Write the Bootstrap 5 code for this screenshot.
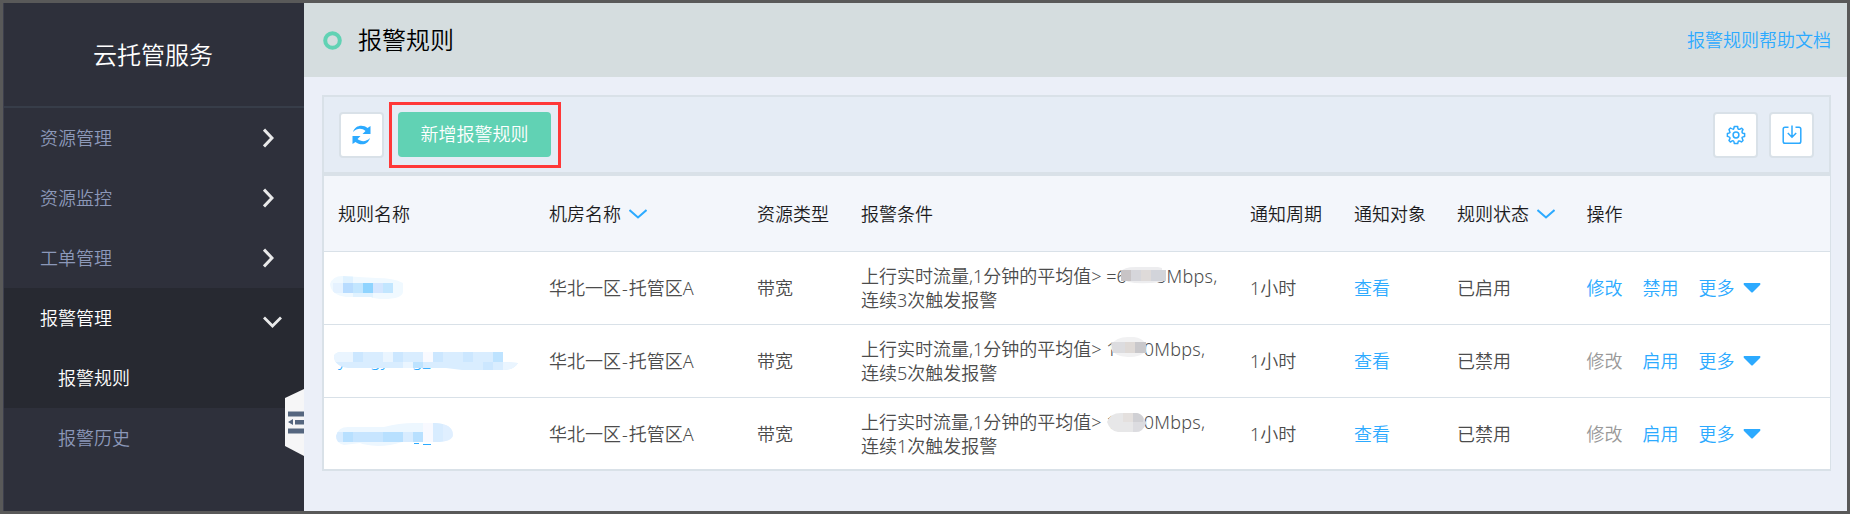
<!DOCTYPE html>
<html lang="zh-CN">
<head>
<meta charset="utf-8">
<title>报警规则</title>
<link href="https://cdn.jsdelivr.net/npm/bootstrap@5.3.0/dist/css/bootstrap.min.css" rel="stylesheet">
<style>
body{font-family:"Noto Sans","Noto Sans CJK SC",sans-serif;font-size:18px;font-weight:350;line-height:24px;color:#4c4c4c;background:#ebeff8}
svg{display:block}
a{color:#2caaff;text-decoration:none}
.frame{height:514px;border:3px solid #595959}
.side{width:301px;background:#2e303b;border-left:1px solid #3d3f4d}
.brand{height:105px;border-bottom:2px solid #373d49;font-size:24px;color:#fff;padding-right:2px;padding-bottom:0}
.item{height:60px;padding-left:36px;padding-right:30px;color:#8c98b9}
.sub{padding-left:54px}
.on{background:#272931;color:#fff}
.handle{right:0;top:386px}
.top{height:74px;background:#d5dddf;padding:0 16px 0 19px}
.top h1{font-size:24px;font-weight:350;color:#000;margin:0 0 0 16px;line-height:30px}
.panel{margin:18px 16px 0 18px;border:2px solid #d9e1e8;border-right-width:1px;background:#fff}
.tools{height:77px;background:#e5ecf5;border-bottom:2px solid #d9e1e8;padding:1px 15px 0 15px;border-right:1px solid #d9e1e8}
.sq{width:45px;height:46px;border:2px solid #d9e1e8;border-radius:4px;background:#fff;padding:0}
.hot{width:172px;height:66px;border:3px solid #ff3838;margin-left:5px;padding:0 1px 1px 0}
.add{--bs-btn-border-width:0;width:153px;height:45px;border-radius:4px;background:#61d2b4;color:#fff;font-size:18px;font-weight:350;padding:0}
.add:hover{background:#61d2b4;color:#fff}
.rules{table-layout:fixed;margin:0;--bs-table-bg:transparent;color:inherit}
.rules>:not(caption)>*>*{padding:1px 0 0;border-bottom:0;vertical-align:middle;color:inherit}
.rules th{font-weight:350;color:#1c1c1e}
.rules thead tr{height:76px;background:#f3f6fb;border-top:2px solid #d9e1e8}
.rules tbody tr{height:73px;border-top:1px solid #d9e1e8}
.rules tbody tr:last-child{height:72px}
.off{color:#999}
.gt{margin-right:4.5px}
.dash{margin:0 1px}
.unit{letter-spacing:.3px}
.hid{display:inline-block;position:relative;height:24px;vertical-align:top}
.hid svg{position:absolute;left:0;top:0}
.hid .tail{position:absolute;right:0}
.acts{gap:20px}
</style>
</head>
<body>
<div class="frame d-flex overflow-hidden">
  <nav class="side flex-shrink-0 position-relative">
    <div class="brand d-flex align-items-center justify-content-center">云托管服务</div>
    <div class="item d-flex align-items-center justify-content-between">资源管理<svg width="11" height="20" fill="none" stroke="#e9e9ea" stroke-width="3"><path d="M1 1.500L9 10L1 18.500"/></svg></div>
    <div class="item d-flex align-items-center justify-content-between">资源监控<svg width="11" height="20" fill="none" stroke="#e9e9ea" stroke-width="3"><path d="M1 1.500L9 10L1 18.500"/></svg></div>
    <div class="item d-flex align-items-center justify-content-between">工单管理<svg width="11" height="20" fill="none" stroke="#e9e9ea" stroke-width="3"><path d="M1 1.500L9 10L1 18.500"/></svg></div>
    <div class="item on d-flex align-items-center justify-content-between" style="padding-right:22px">报警管理<svg width="19" height="12" class="mt-2" fill="none" stroke="#e9e9ea" stroke-width="2.800"><path d="M1 1.500L9.500 10L18 1.500"/></svg></div>
    <div class="item sub on d-flex align-items-center">报警规则</div>
    <div class="item sub d-flex align-items-center">报警历史</div>
    <svg class="handle position-absolute" width="19" height="67"><path d="M0 9L19 0V67L0 57Z" fill="#f6f6f7"/><path d="M3 22.500H19V27.500H3ZM10 31H19V35.500H10ZM8 30V36L3 33ZM3 39.500H19V44.500H3Z" fill="#55667f"/></svg>
  </nav>
  <main class="flex-grow-1">
    <header class="top d-flex align-items-center">
      <svg width="19" height="19"><circle cx="9.500" cy="9.500" r="7.300" fill="none" stroke="#61d2b4" stroke-width="4"/></svg>
      <h1>报警规则</h1>
      <a href="#" class="ms-auto">报警规则帮助文档</a>
    </header>
    <section class="panel">
      <div class="tools d-flex align-items-center">
        <button class="sq d-flex align-items-center justify-content-center"><svg width="20" height="20" fill="#2caaff"><path d="M1 7C3 0 11-1 15.500 3L18.500 1V9H10.500L13.500 6C10 3 5 3 1 7ZM18 13C16 20 8.500 21 3.500 17L.5 19V11H8.500L5.500 14C9.500 17 14 17 18 13Z"/></svg></button>
        <div class="hot d-flex align-items-center justify-content-center"><button class="add btn">新增报警规则</button></div>
        <button class="sq ms-auto d-flex align-items-center justify-content-center"><svg width="20" height="20" viewBox="0 0 20 20" fill="none" stroke="#2caaff" stroke-width="1.500"><circle cx="10" cy="10" r="2.900"/><path d="M8.300 1.500H11.700Q11.500 5 14 4.200L15.700 3.200L17 4.500Q15 7.500 17 8.200L18.600 8.600V11.400Q15 12 16.300 13.500L17 15.500L15.500 17Q12.500 15 12.200 16.600L11.700 18.500H8.300Q8 15 6.200 15.900L4.400 17L3 15.500Q5 12.500 3 11.900L1.400 11.400V8.600Q5 8 3.700 6.500L3 4.500L4.500 3Q7.500 5 7.800 3.500Z" stroke-linejoin="round"/></svg></button>
        <button class="sq d-flex align-items-center justify-content-center" style="margin-left:11px"><svg width="20" height="20" fill="none" stroke="#2caaff" stroke-width="1.500"><path d="M6.500 2.200H3Q1.200 2.200 1.200 4V16.500Q1.200 18.300 3 18.300H17Q18.800 18.300 18.800 16.500V4Q18.800 2.200 17 2.200H13.500M10 0.500V12M5.800 8L10 12.200L14.200 8"/></svg></button>
      </div>
      <table class="rules table">
        <colgroup><col style="width:225px"><col style="width:208px"><col style="width:104px"><col style="width:389px"><col style="width:104px"><col style="width:103px"><col style="width:129.5px"><col></colgroup>
        <thead><tr>
          <th><div style="padding-left:14px">规则名称</div></th>
          <th><div class="d-flex align-items-center">机房名称<svg class="ms-2" width="18" height="10" fill="none" stroke="#2caaff" stroke-width="2"><path d="M.5 1L9 8.500L17.500 1"/></svg></div></th>
          <th>资源类型</th><th>报警条件</th><th>通知周期</th><th>通知对象</th>
          <th><div class="d-flex align-items-center">规则状态<svg class="ms-2" width="18" height="10" fill="none" stroke="#2caaff" stroke-width="2"><path d="M.5 1L9 8.500L17.500 1"/></svg></div></th>
          <th>操作</th>
        </tr></thead>
        <tbody>
        <tr>
          <td><svg width="205" height="30"><clipPath id="c1"><path d="M6 11Q9 3 18 3L52 5Q70 5 79 10V19Q78 26 60 26Q52 26 47 24H22Q7 22 6 11Z"/></clipPath><g clip-path="url(#c1)"><path fill="#f0f9ff" d="M0 0H90V30H0Z"/><path fill="#e0f2ff" d="M19 0H29V10H19ZM29 20H49V30H29Z"/><path fill="#e5f2ff" d="M9 10H19V20H9Z"/><path fill="#b8dcff" d="M19 10H29V20H19Z"/><path fill="#c2e6ff" d="M29 10H39V20H29ZM59 10H69V20H59Z"/><path fill="#8fd4ff" d="M39 10H49V20H39Z"/><path fill="#d4e6ff" d="M49 10H59V20H49Z"/></g></svg></td>
          <td>华北一区<span class="dash">-</span>托管区A</td><td>带宽</td>
          <td>上行实时流量,1分钟的平均值<span class="gt">&gt;</span>=<span class="hid" style="width:50px">6<span class="tail">5</span><svg width="50" height="24"><path fill="#ededef" d="M5 8Q7 3 20 3H42L46 4V18Q12 22 5 14Z"/><path fill="#c8c4c6" d="M5 6H15V17H5Z"/><path fill="#d6d6db" d="M15 6H25V17H15Z"/><path fill="#dedad9" d="M25 6H35V17H25Z"/><path fill="#d2d4da" d="M35 6H50V17H35Z"/></svg></span><span class="unit">Mbps,</span><br>连续3次触发报警</td>
          <td>1小时</td><td><a href="#">查看</a></td><td>已启用</td>
          <td><div class="acts d-flex align-items-center"><a href="#">修改</a><a href="#">禁用</a><a href="#" class="d-flex align-items-center">更多<svg class="ms-2" width="18" height="10" fill="#2caaff"><path d="M1 0H17Q18 1 17 2L10 9Q9 10 8 9L1 2Q0 1 1 0Z"/></svg></a></div></td>
        </tr>
        <tr>
          <td><svg width="205" height="30"><g fill="#2caaff" font-size="18"><text x="14" y="20">y</text><text x="46" y="20">gy</text><text x="88" y="20">g_</text><text x="157" y="20">q</text></g><clipPath id="c2"><path d="M10 10Q11 6 18 6H179V16L194 17Q190 24 179 24H138L122 22H24Q10 20 10 10Z"/></clipPath><g clip-path="url(#c2)"><path fill="#d9edff" d="M0 0H200V30H0Z"/><path fill="#eaf5ff" d="M0 0H29V16H0ZM59 0H69V16H59ZM79 16H89V30H79ZM179 16H200V30H179Z"/><path fill="#cce7ff" d="M29 6H39V16H29ZM69 6H79V16H69ZM109 6H119V16H109ZM139 6H149V16H139ZM159 16H169V30H159Z"/><path fill="#f9faff" d="M99 0H109V16H99Z"/><path fill="#bee3ff" d="M89 16H99V30H89ZM169 0H179V16H169Z"/></g></svg></td>
          <td>华北一区<span class="dash">-</span>托管区A</td><td>带宽</td>
          <td>上行实时流量,1分钟的平均值<span class="gt">&gt;</span><span class="hid" style="width:48px">1<span class="tail">0</span><svg width="48" height="24"><path fill="#f1f1f2" d="M5 8Q10 0 22 0Q35 -1 39 6V14Q36 20 22 20Q8 19 5 12Z"/><path fill="#dcdcdf" d="M5 5H19V16H7Z"/><path fill="#ded9d6" d="M19 5H29V16H19Z"/><path fill="#c9c8cb" d="M29 5H40V16H29Z"/></svg></span><span class="unit">Mbps,</span><br>连续5次触发报警</td>
          <td>1小时</td><td><a href="#">查看</a></td><td>已禁用</td>
          <td><div class="acts d-flex align-items-center"><span class="off">修改</span><a href="#">启用</a><a href="#" class="d-flex align-items-center">更多<svg class="ms-2" width="18" height="10" fill="#2caaff"><path d="M1 0H17Q18 1 17 2L10 9Q9 10 8 9L1 2Q0 1 1 0Z"/></svg></a></div></td>
        </tr>
        <tr>
          <td><svg width="205" height="30"><g fill="#2caaff"><path d="M90 24H95V25H90ZM99 25H107V26H99Z"/></g><clipPath id="c3"><path d="M12 17Q14 8 24 8H60Q75 4 90 4H112Q129 5 129 16Q128 23 112 23H78Q66 27 54 27Q40 26 36 24L20 26Q12 24 12 17Z"/></clipPath><g clip-path="url(#c3)"><path fill="#edf7ff" d="M0 0H140V30H0Z"/><path fill="#b8e0ff" d="M19 13H29V23H19ZM59 13H79V23H59ZM89 13H99V23H89Z"/><path fill="#c7e5ff" d="M29 13H59V23H29Z"/><path fill="#d8ecff" d="M9 13H19V23H9ZM79 13H89V23H79ZM109 0H119V30H109Z"/><path fill="#f8f9ff" d="M99 0H109V30H99Z"/><path fill="#e0efff" d="M119 0H130V30H119Z"/></g></svg></td>
          <td>华北一区<span class="dash">-</span>托管区A</td><td>带宽</td>
          <td>上行实时流量,1分钟的平均值<span class="gt">&gt;</span><span class="hid" style="width:48px">1<span class="tail">0</span><svg width="48" height="24"><clipPath id="c4"><path d="M1 12Q4 3 15 3H31Q37 4 40 13Q37 22 30 22H12Q4 21 1 12Z"/></clipPath><g clip-path="url(#c4)"><path fill="#e7e7e8" d="M0 0H46V24H0Z"/><path fill="#e4e0de" d="M17 0H27V12H17Z"/><path fill="#d0d0d4" d="M27 0H37V12H27Z"/><path fill="#dcdce0" d="M27 12H46V24H27ZM37 0H46V12H37Z"/></g></svg></span><span class="unit">Mbps,</span><br>连续1次触发报警</td>
          <td>1小时</td><td><a href="#">查看</a></td><td>已禁用</td>
          <td><div class="acts d-flex align-items-center"><span class="off">修改</span><a href="#">启用</a><a href="#" class="d-flex align-items-center">更多<svg class="ms-2" width="18" height="10" fill="#2caaff"><path d="M1 0H17Q18 1 17 2L10 9Q9 10 8 9L1 2Q0 1 1 0Z"/></svg></a></div></td>
        </tr>
        </tbody>
      </table>
    </section>
  </main>
</div>
<script src="https://cdn.jsdelivr.net/npm/bootstrap@5.3.0/dist/js/bootstrap.bundle.min.js"></script>
</body>
</html>
